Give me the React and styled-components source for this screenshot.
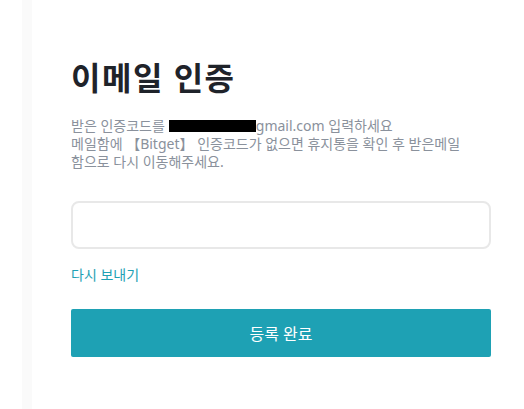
import React from 'react';
import styled, { createGlobalStyle } from 'styled-components';

const GlobalStyle = createGlobalStyle`
  html, body {
    margin: 0;
    padding: 0;
    background: #ffffff;
  }
  body {
    font-family: "Noto Sans", "Noto Sans CJK KR", sans-serif;
  }
`;

const Page = styled.div`
  display: flex;
  min-height: 409px;
  width: 524px;
  overflow: hidden;
`;

const Gutter = styled.div`
  width: 22px;
  flex-shrink: 0;
  background: #ffffff;
`;

const Shade = styled.div`
  width: 10px;
  flex-shrink: 0;
  background: #fafafa;
`;

const Content = styled.div`
  width: 420px;
  padding: 55px 0 0 39px;
  display: flex;
  flex-direction: column;
`;

const Title = styled.h1`
  margin: 0;
  font-size: 32px;
  font-weight: 700;
  line-height: 46px;
  color: #1f232a;
  letter-spacing: 1.5px;
`;

const Desc = styled.p`
  margin: 16px 0 0;
  font-size: 14px;
  line-height: 18px;
  color: #8a919c;
  white-space: nowrap;
`;

const Redacted = styled.span`
  display: inline-block;
  width: 87px;
  height: 12px;
  margin-left: 4px;
  background: #000;
  vertical-align: -1px;
`;

const CodeInput = styled.input`
  margin-top: 30px;
  height: 48px;
  box-sizing: border-box;
  border: 2px solid #e8e8e8;
  border-radius: 8px;
  outline: none;
  padding: 0 14px;
  font-size: 14px;
`;

const Resend = styled.a`
  margin-top: 17px;
  font-size: 14px;
  line-height: 18px;
  color: #1ea1b4;
  cursor: pointer;
  align-self: flex-start;
`;

const Submit = styled.button`
  margin-top: 25px;
  height: 48px;
  border: none;
  border-radius: 2px;
  background: #1ea1b4;
  color: #ffffff;
  font-family: inherit;
  font-size: 16px;
  cursor: pointer;
`;

export default function App() {
  return (
    <Page>
      <GlobalStyle />
      <Gutter />
      <Shade />
      <Content>
        <Title>이메일 인증</Title>
        <Desc>
          받은 인증코드를<Redacted />gmail.com 입력하세요
          <br />
          메일함에 【Bitget】 인증코드가 없으면 휴지통을 확인 후 받은메일
          <br />
          함으로 다시 이동해주세요.
        </Desc>
        <CodeInput type="text" />
        <Resend>다시 보내기</Resend>
        <Submit>등록 완료</Submit>
      </Content>
    </Page>
  );
}
